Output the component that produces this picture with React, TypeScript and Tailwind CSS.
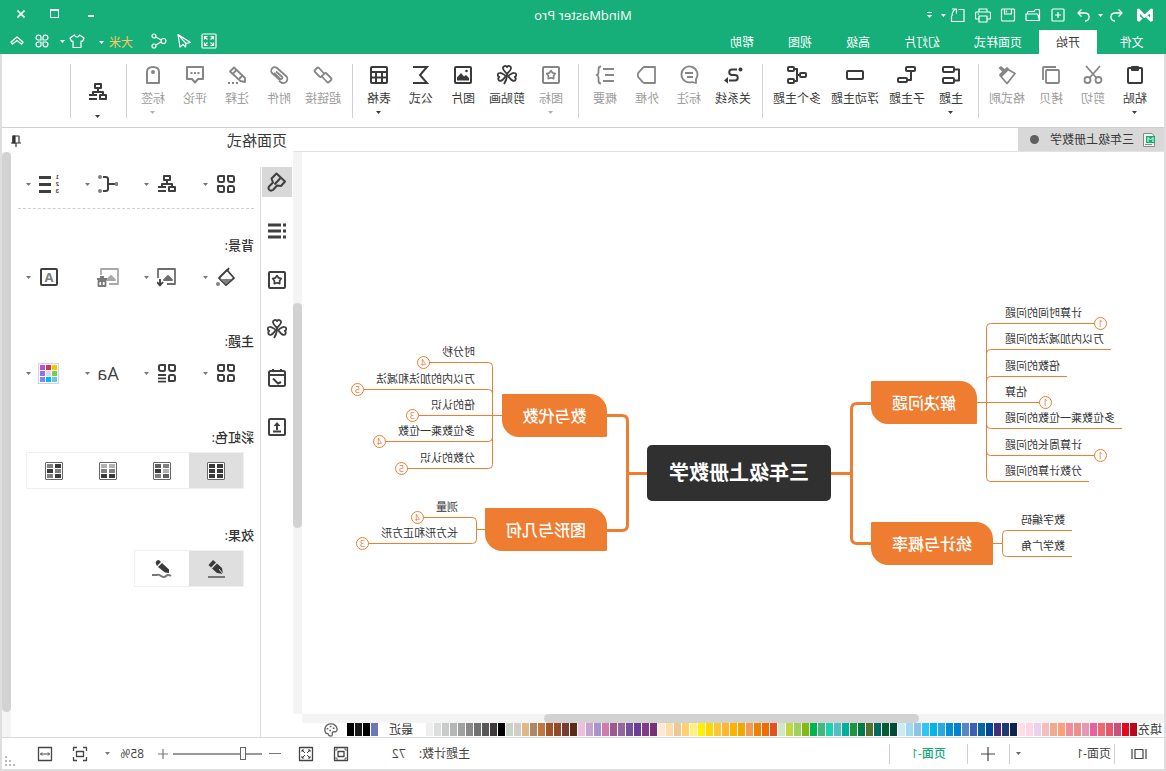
import { ReactNode, useState } from "react";

type IconProps = { children: ReactNode; size?: string; width?: number; box?: number };

function Icon({ children, size = "size-5", width = 2, box = 20 }: IconProps) {
  return (
    <svg
      className={`${size} shrink-0`}
      viewBox={`0 0 ${box} ${box}`}
      fill="none"
      stroke="currentColor"
      strokeWidth={width}
      strokeLinejoin="round"
      aria-hidden="true"
    >
      {children}
    </svg>
  );
}

function Caret({ className = "" }: { className?: string }) {
  return (
    <svg className={`h-[3px] w-[5px] shrink-0 ${className}`} viewBox="0 0 5 3" fill="currentColor" aria-hidden="true">
      <path d="M0 0h5L2.5 3z" />
    </svg>
  );
}

/* ---------- shared drawings ---------- */

const leaf = "M10 10C8.500 8 6 6.500 6 4.300A2.100 2.100 0 0 1 10 3.200A2.100 2.100 0 0 1 14 4.300C14 6.500 11.500 8 10 10Z";

const clover = (
  <Icon width={1.8}>
    <path d={leaf} transform="translate(0 -1)" />
    <path d={leaf} transform="translate(-1 1) rotate(-98 10 10)" />
    <path d={leaf} transform="translate(1 1) rotate(98 10 10)" />
    <path d="M10 9c0 4 .8 7 3 10" />
  </Icon>
);

const starBox = (
  <Icon>
    <rect x="2" y="2" width="16" height="16" rx="1" />
    <path d="M10 5.600l1.600 2.300 2.700.700-1.700 2.200.1 2.800-2.700-.9-2.700.9.1-2.800-1.700-2.200 2.700-.7z" strokeWidth="1.700" />
  </Icon>
);

const orgChart = (
  <Icon>
    <rect x="7" y="2" width="6" height="4" />
    <path d="M10 6v4M5 12v-2h10v2" />
    <rect x="2" y="13" width="6" height="4" />
    <path d="M11 13h8M11 17h8" />
  </Icon>
);

const fourShapes = (
  <Icon>
    <path d="M2 3.500Q2 2 3.500 2H8v3.500Q8 8 5.500 8H3.500Q2 8 2 6.500z" />
    <path d="M12 2h4.500Q18 2 18 3.500V6q0 2-2 2h-2.500Q12 8 12 6.500z" />
    <path d="M2 14q0-2 2-2h2.500Q8 12 8 13.500V18H3.500Q2 18 2 16.500z" />
    <path d="M12 13.500q0-1.500 1.500-1.500H18v3.500q0 2.500-2.500 2.500h-2Q12 18 12 16.500z" />
  </Icon>
);

/* ---------- ribbon ---------- */

type Tool = { label: string; icon: ReactNode; off?: boolean; menu?: boolean };

const toolGroups: Tool[][] = [
  [
    {
      label: "粘贴",
      menu: true,
      icon: (
        <Icon>
          <rect x="3" y="3" width="14" height="15" rx="1" />
          <path d="M7 2h6v3H7z" />
        </Icon>
      ),
    },
    {
      label: "剪切",
      off: true,
      icon: (
        <Icon width={1.8}>
          <circle cx="4.500" cy="15" r="3" />
          <circle cx="15.500" cy="15" r="3" />
          <path d="M3 1l10.500 12M17 1L6.500 13" />
        </Icon>
      ),
    },
    {
      label: "拷贝",
      off: true,
      icon: (
        <Icon width={1.8}>
          <rect x="2" y="5" width="13" height="13" rx="1" />
          <path d="M5 2h12q1 0 1 1v12" />
        </Icon>
      ),
    },
    {
      label: "格式刷",
      off: true,
      icon: (
        <Icon width={1.8}>
          <path d="M9 4.500L2 8.500l8 10 6-7z" />
          <path d="M8 3.500l9 8.500 1-2.500-3-3L18.500 3 16 1l-3.500 3L10 2z" fill="currentColor" stroke="none" />
        </Icon>
      ),
    },
  ],
  [
    {
      label: "主题",
      menu: true,
      icon: (
        <Icon>
          <rect x="7" y="2" width="11" height="5" rx="1" />
          <rect x="7" y="13" width="11" height="5" rx="1" />
          <path d="M7 4.500H2v11h5" />
        </Icon>
      ),
    },
    {
      label: "子主题",
      icon: (
        <Icon>
          <rect x="2" y="2" width="9" height="4" rx="1" />
          <rect x="10" y="13" width="9" height="4" rx="1" />
          <path d="M6 6v9h4" />
        </Icon>
      ),
    },
    {
      label: "浮动主题",
      icon: (
        <Icon>
          <rect x="2" y="6" width="16" height="8" rx="1" />
        </Icon>
      ),
    },
    {
      label: "多个主题",
      icon: (
        <Icon>
          <rect x="1" y="8" width="6" height="4" rx="1" />
          <rect x="13" y="2" width="6" height="4" rx="1" />
          <rect x="13" y="14" width="6" height="4" rx="1" />
          <path d="M7 10h3M13 4h-3v12h3" />
        </Icon>
      ),
    },
  ],
  [
    {
      label: "关系线",
      icon: (
        <Icon>
          <circle cx="2.500" cy="4.500" r="2" fill="currentColor" stroke="none" />
          <path d="M14 4.500H9a2.700 2.700 0 0 0 0 5.500h3a2.700 2.700 0 0 1 0 5.500H6" transform="matrix(-1 0 0 1 20 0)" />
          <path d="M15 12l4 3.500-4 3z" fill="currentColor" stroke="none" />
        </Icon>
      ),
    },
    {
      label: "标注",
      off: true,
      icon: (
        <Icon width={1.8}>
          <path d="M3 18v-4A8 8 0 1 1 7 17z" />
          <path d="M6 8h8M6 12h6" />
        </Icon>
      ),
    },
    {
      label: "外框",
      off: true,
      icon: (
        <Icon width={1.8}>
          <path d="M2 2h10.500q1 0 1.500.700l4.500 5q1.500 2.300 0 4.600l-4.500 5q-.5.700-1.500.700H2z" />
        </Icon>
      ),
    },
    {
      label: "概要",
      off: true,
      icon: (
        <Icon width={1.8}>
          <path d="M1 4h11M1 10h9M1 16h11M14 1.500q2.500 0 2.500 3v3q0 2 2 2.500-2 .5-2 2.500v3q0 3-2.500 3" />
        </Icon>
      ),
    },
  ],
  [
    { label: "图标", off: true, menu: true, icon: starBox },
    { label: "剪贴画", icon: clover },
    {
      label: "图片",
      icon: (
        <Icon>
          <rect x="2" y="2" width="16" height="16" rx="1" />
          <path d="M4 15.500v-2.500l3-3 2 1.500L12 8l4 4.500v3z" fill="currentColor" stroke="none" />
          <circle cx="6.500" cy="6" r="1.300" fill="currentColor" stroke="none" />
        </Icon>
      ),
    },
    {
      label: "公式",
      icon: (
        <Icon>
          <path d="M18 2H4l7 8-7 8h14" strokeLinejoin="miter" />
        </Icon>
      ),
    },
    {
      label: "表格",
      menu: true,
      icon: (
        <Icon>
          <rect x="2" y="2" width="16" height="16" rx="1" />
          <path d="M2 7h16M2 12.500h16M7 7v11M13 7v11" />
        </Icon>
      ),
    },
  ],
  [
    {
      label: "超链接",
      off: true,
      icon: (
        <Icon width={1.8}>
          <path d="M8.500 9L14 3q1-1 2 0l2 2q1 1 0 2l-4.500 4.500q-1 1-2 0L10 10" />
          <path d="M11.500 11L6 17q-1 1-2 0l-2-2q-1-1 0-2l4.500-4.500q1-1 2 0L10 10" />
        </Icon>
      ),
    },
    {
      label: "附件",
      off: true,
      icon: (
        <Icon width={1.8}>
          <path d="M9 15l7.500-6.500a3.500 3.500 0 0 0-4.500-5.500L3 11a4 4 0 0 0 5.500 6l1.500-1.500M13 6.500l-6 5.200a1.400 1.400 0 0 0 2 2L15 8" />
        </Icon>
      ),
    },
    {
      label: "注释",
      off: true,
      icon: (
        <Icon width={1.8}>
          <path d="M2 17v-4L13 2.500l4 4L6.500 16z" />
          <path d="M10.500 5l4 4M5 11l3 3" />
          <path d="M9 18h2M13 18h2M17 18h2" />
        </Icon>
      ),
    },
    {
      label: "评论",
      off: true,
      icon: (
        <Icon>
          <path d="M2 2h16v12h-5l-3 3.500L7 14H2z" />
          <path d="M5.500 8h2M9 8h2M12.500 8h2" />
        </Icon>
      ),
    },
    {
      label: "标签",
      off: true,
      menu: true,
      icon: (
        <Icon>
          <path d="M4 18V7q0-5 6-5t6 5v11z" />
          <circle cx="10" cy="7" r="2" fill="currentColor" stroke="none" />
        </Icon>
      ),
    },
  ],
];

const toolWidths: Record<number, string> = { 2: "w-[42px]", 3: "w-[46px]", 4: "w-[58px]" };

function ToolButton({ label, icon, off, menu }: Tool) {
  return (
    <button
      type="button"
      className={`flex h-[64px] flex-col items-center pt-[1px] ${toolWidths[label.length]} ${
        off ? "text-[#868686]" : "text-[#3a3a3a]"
      }`}
    >
      {icon}
      <span className={`mt-[6px] text-xs leading-4 whitespace-nowrap ${off ? "text-[#9c9c9c]" : ""}`}>{label}</span>
      {menu && <Caret className={off ? "mt-[4px] text-[#b0b0b0]" : "mt-[4px]"} />}
    </button>
  );
}

function Divider() {
  return <div className="mr-[6px] ml-[5px] h-[54px] w-px bg-[#d2d2d2]" />;
}

function Ribbon() {
  return (
    <div className="flex h-[74px] items-start border-b border-[#d0d0d0] bg-white pt-[10px] pl-2">
      {toolGroups.map((group, i) => (
        <div key={i} className="flex">
          {group.map((tool) => (
            <ToolButton key={tool.label} {...tool} />
          ))}
          <Divider />
        </div>
      ))}
      <button type="button" aria-label="布局" className="flex w-11 flex-col items-center pt-[18px] text-[#3a3a3a]">
        {orgChart}
        <Caret className="mt-[13px]" />
      </button>
      <Divider />
    </div>
  );
}

/* ---------- header ---------- */

function QuickButton({ label, children, className = "w-[25px]" }: { label: string; children: ReactNode; className?: string }) {
  return (
    <button type="button" aria-label={label} className={`flex h-full items-center justify-center ${className}`}>
      {children}
    </button>
  );
}

const menuTabs = ["文件", "开始", "页面样式", "幻灯片", "高级", "视图", "帮助"];

function Header() {
  const [tab, setTab] = useState("开始");

  return (
    <header className="bg-[#16ae79] text-white">
      <div className="grid h-[30px] grid-cols-[1fr_auto_1fr] items-center">
        <div className="flex h-full items-center pl-[12px]">
          <svg className="h-4 w-[18px]" viewBox="0 0 18 16" fill="none" stroke="currentColor" strokeWidth="3" aria-hidden="true">
            <path d="M2.500 14V3l7 6.500L15.500 3v10.500" strokeLinejoin="round" />
            <path d="M2 14l5-4.500M16 14l-3.500-3.500" />
          </svg>
          <QuickButton label="撤销" className="ml-2 w-6">
            <Icon size="size-4" width={1.3} box={16}>
              <path d="M5.500 2.500L2 6l3.500 3.500M2 6h6.500c6 0 6 7.500.5 8" />
            </Icon>
          </QuickButton>
          <Caret className="mx-[1px]" />
          <QuickButton label="重做" className="w-[26px]">
            <Icon size="size-4" width={1.3} box={16}>
              <path d="M10.500 2.500L14 6l-3.500 3.500M14 6H7.500c-6 0-6 7.500-.5 8" />
            </Icon>
          </QuickButton>
          <QuickButton label="新建">
            <Icon size="size-4" width={1.2} box={16}>
              <rect x="2" y="2" width="12" height="12" rx="1" />
              <path d="M8 5v6M5 8h6" />
            </Icon>
          </QuickButton>
          <QuickButton label="打开">
            <Icon size="size-4" width={1.2} box={16}>
              <path d="M1.500 13.500V3.500q0-1 1-1h3l1.500 2h5.500q1 0 1 1v1.500M1.500 13.500L3 8q.3-1 1.300-1H15v5.500q0 1-1 1z" />
            </Icon>
          </QuickButton>
          <QuickButton label="保存">
            <Icon size="size-4" width={1.2} box={16}>
              <rect x="1.500" y="2" width="13" height="12" rx="1" />
              <path d="M4.500 2v5h7V2M9.500 3.500v2" />
            </Icon>
          </QuickButton>
          <QuickButton label="打印">
            <Icon size="size-4" width={1.2} box={16}>
              <path d="M4 5V2h8v3M4 12H1.500q-1 0-1-1V6q0-1 1-1h13q1 0 1 1v5q0 1-1 1H12" />
              <path d="M4 9h8v6H4zM12 7h1.500" />
            </Icon>
          </QuickButton>
          <QuickButton label="导出">
            <Icon size="size-4" width={1.2} box={16}>
              <path d="M7.500 2.500H2v12h12.500V9M14 2H9.500v4.500M9.500 2C13 3 14 6 14 9" />
            </Icon>
          </QuickButton>
          <Caret />
          <button type="button" aria-label="自定义" className="ml-[9px] flex flex-col items-center gap-[2px]">
            <span className="h-[1px] w-[5px] bg-white" />
            <Caret />
          </button>
        </div>
        <h1 className="text-[13px] leading-5">MindMaster Pro</h1>
        <div className="flex h-full items-center justify-end pr-[5px]">
          <QuickButton label="最小化" className="w-9">
            <span className="mt-[2px] h-[2px] w-[6px] bg-white" />
          </QuickButton>
          <QuickButton label="最大化" className="w-9">
            <span className="-mt-1 h-[9px] w-[9px] border border-t-2 border-white" />
          </QuickButton>
          <QuickButton label="关闭" className="w-8 pb-[2px]">
            <Icon size="size-2" width={1.6} box={8}>
              <path d="M.5.5l7 7M7.500.5l-7 7" />
            </Icon>
          </QuickButton>
        </div>
      </div>

      <div className="flex h-6 items-stretch">
        <nav className="flex text-xs">
          {menuTabs.map((name, i) => (
            <button
              key={name}
              type="button"
              onClick={() => setTab(name)}
              className={`pt-[2px] ${i === 0 ? "w-[69px]" : "px-[17px]"} ${tab === name ? "bg-white text-[#3a3a3a]" : ""}`}
            >
              {name}
            </button>
          ))}
        </nav>
        <div className="ml-auto flex items-center pr-[5px] pb-[2px]">
          <QuickButton label="全屏">
            <Icon size="size-4" width={1.2} box={16}>
              <rect x="1" y="1" width="14" height="14" rx="1" />
              <path d="M3.500 6.500v-3h3M3.500 3.500l3 3M12.500 6.500v-3h-3M12.500 3.500l-3 3M3.500 9.500v3h3M3.500 12.500l3-3M12.500 9.500v3h-3M12.500 12.500l-3-3" />
            </Icon>
          </QuickButton>
          <QuickButton label="发送">
            <Icon size="size-4" width={1.2} box={16}>
              <path d="M14 1.500L1.500 9.500 6 10.500l.5 3.500 2.500-2.500 3 2.500zM14 1.500L6 10.500" />
            </Icon>
          </QuickButton>
          <QuickButton label="分享">
            <Icon size="size-4" width={1.2} box={16}>
              <circle cx="3.500" cy="8" r="2.500" />
              <circle cx="13" cy="3" r="2" />
              <circle cx="13" cy="13" r="2" />
              <path d="M5.800 7l5.500-3M5.800 9l5.500 3" />
            </Icon>
          </QuickButton>
          <button type="button" className="ml-[13px] flex items-center gap-[5px] pt-[3px] text-xs leading-4 text-[#ffc95c]">
            大米
            <Caret className="text-white" />
          </button>
          <QuickButton label="皮肤" className="ml-[10px] w-6">
            <Icon size="size-4" width={1.2} box={16}>
              <path d="M5.500 2L1 5l1.500 3.500L4 8v6.500h8V8l1.500.5L15 5l-4.500-3q-.5 2-2.500 2T5.500 2z" />
            </Icon>
          </QuickButton>
          <Caret />
          <QuickButton label="应用" className="ml-[5px] w-[26px]">
            <Icon size="size-4" width={1.2} box={16}>
              <path d="M7 7V4a2.500 2.500 0 1 0-3 3zM9 7V4a2.500 2.500 0 1 1 3 3zM7 9v3a2.500 2.500 0 1 1-3-3zM9 9v3a2.500 2.500 0 1 0 3-3z" />
            </Icon>
          </QuickButton>
          <QuickButton label="收起" className="w-6">
            <Icon size="size-4" width={1.3} box={16}>
              <path d="M2 9l6-5 6 5-1.500 2L8 7.500 3.500 11z" />
            </Icon>
          </QuickButton>
        </div>
      </div>
    </header>
  );
}

/* ---------- mind map ---------- */

type Leaf = { text: string; y: number; count?: number };
type Branch = {
  text: string;
  side: "left" | "right";
  box: { x: number; y: number; w: number };
  spine: number;
  textX: number;
  leaves: Leaf[];
};

// Coordinates are canvas pixels. textX is the edge of the leaf text nearest to the branch.
const branches: Branch[] = [
  {
    text: "解决问题",
    side: "left",
    box: { x: 187, y: 229, w: 106 },
    spine: 177,
    textX: 159,
    leaves: [
      { text: "计算时间的问题", y: 171, count: 1 },
      { text: "万以内加减法的问题", y: 197 },
      { text: "倍数的问题", y: 224 },
      { text: "估算", y: 250, count: 1 },
      { text: "多位数乘一位数的问题", y: 276 },
      { text: "计算周长的问题", y: 303, count: 1 },
      { text: "分数计算的问题", y: 329 },
    ],
  },
  {
    text: "统计与概率",
    side: "left",
    box: { x: 171, y: 370, w: 122 },
    spine: 161,
    textX: 143,
    leaves: [
      { text: "数字编码", y: 378 },
      { text: "数学广角", y: 404 },
    ],
  },
  {
    text: "数与代数",
    side: "right",
    box: { x: 557, y: 242, w: 105 },
    spine: 671,
    textX: 689,
    leaves: [
      { text: "时分秒", y: 210, count: 4 },
      { text: "万以内的加法和减法", y: 237, count: 5 },
      { text: "倍的认识", y: 263, count: 3 },
      { text: "多位数乘一位数", y: 289, count: 4 },
      { text: "分数的认识", y: 316, count: 5 },
    ],
  },
  {
    text: "图形与几何",
    side: "right",
    box: { x: 557, y: 356, w: 122 },
    spine: 687,
    textX: 706,
    leaves: [
      { text: "测量", y: 365, count: 4 },
      { text: "长方形和正方形", y: 391, count: 3 },
    ],
  },
];

function branchPath({ side, box, spine, textX, leaves }: Branch) {
  const dir = side === "left" ? -1 : 1;
  const boxEdge = side === "left" ? box.x : box.x + box.w;
  const mid = box.y + 21.5;
  const s = spine + 0.5;
  const parts = [`M${boxEdge} ${mid}H${s}`];
  leaves.forEach((l) => {
    const y = l.y + 0.5;
    const end = textX + dir * (l.text.length * 11 + (l.count ? 13 : 7));
    const bend = Math.abs(y - mid) < 2 ? 0 : y < mid ? 4 : -4;
    parts.push(`M${s} ${mid}V${y + bend}Q${s} ${y} ${s + dir * Math.abs(bend)} ${y}H${end}`);
  });
  return parts.join("");
}

function MindMap() {
  return (
    <div className="relative h-[562px] flex-1 overflow-hidden bg-white">
      <svg className="absolute inset-0 size-full" fill="none" stroke="#ee7d31" aria-hidden="true">
        <path strokeWidth="3" d="M333 321.500H312.500M293 251.500H307Q312.500 251.500 312.500 257V386Q312.500 391.500 307 391.500H293" />
        <path strokeWidth="3" d="M517 321.500H536.500M557 263.500H542Q536.500 263.500 536.500 269V373Q536.500 378.500 542 378.500H557" />
        {branches.map((b) => (
          <path key={b.text} d={branchPath(b)} />
        ))}
      </svg>

      <div className="absolute top-[293px] left-[333px] flex h-14 w-[184px] items-center justify-center rounded-[5px] bg-[#303030] text-xl leading-7 font-bold text-white">
        三年级上册数学
      </div>

      {branches.map((b) => (
        <div key={b.text}>
          <div
            className="absolute flex h-[43px] items-center justify-center rounded-tl-[17px] rounded-tr-[1px] rounded-br-[17px] rounded-bl-[1px] bg-[#ee7d31] text-base leading-6 font-medium text-white"
            style={{ left: b.box.x, top: b.box.y, width: b.box.w }}
          >
            {b.text}
          </div>
          {b.leaves.map((l) => {
            const w = l.text.length * 11;
            const left = b.side === "left" ? b.textX - w : b.textX;
            const badge = b.side === "left" ? left - 25 : left + w + 12;
            return (
              <div key={l.text}>
                <span
                  className="absolute text-[11px] leading-4 whitespace-nowrap text-[#333]"
                  style={{ left, top: l.y - 18 }}
                >
                  {l.text}
                </span>
                {l.count && (
                  <span
                    className="absolute flex size-[13px] items-center justify-center rounded-full border border-[#ee7d31] bg-white text-[9px] leading-3 text-[#ee7d31]"
                    style={{ left: badge, top: l.y - 6 }}
                  >
                    {l.count}
                  </span>
                )}
              </div>
            );
          })}
        </div>
      ))}
    </div>
  );
}

/* ---------- colour strip ---------- */

const palette = [
  "#b60a1c", "#e00a1a", "#c94f7c", "#ec5567", "#ea6a70", "#ea5f9e", "#e597b6", "#ee8e88", "#f28c9a", "#ff9f78",
  "#efaa94", "#f7bdbd", "#ead3ea", "#ffd4e4", "#ffdfe5", "#10234f", "#203a70", "#3f2e7e", "#00499a", "#0468a5",
  "#3e60b0", "#5586c6", "#0082d0", "#0090d8", "#29aae2", "#00b4f0", "#2fc5f5", "#8bc3ea", "#9fdaee", "#cde9f4",
  "#004a38", "#005c33", "#006a5e", "#56702f", "#007a48", "#1e9540", "#00b09a", "#52bfc0", "#1cd0b0", "#43b87c",
  "#00b550", "#80bb10", "#a0d060", "#c0d840", "#cfe7c4", "#e5501e", "#ee6c00", "#ee8200", "#f59a50", "#f2a800",
  "#ffb000", "#ffb52d", "#fbc834", "#ffd800", "#ffef00", "#fff080", "#ffd070", "#edc896", "#ffddaa", "#fde8d0",
  "#7a3078", "#803a88", "#6a3c96", "#77509a", "#9565a0", "#a0588c", "#d07bb0", "#a892d0", "#c5a5cc", "#ecc0dc",
  "#5c2a1a", "#773e30", "#944a28", "#a65228", "#c07740", "#b08668", "#deb887", "#d4ccc6", "#c8d3ca", "#000000",
  "#3e3a39", "#595757", "#727171", "#898989", "#9fa0a0", "#b5b5b6", "#c9caca", "#dcdddd", "#efefef",
];

const recent = ["#6c77b8", "#000000", "#1a1a1a", "#000001"];

function Swatches({ colors }: { colors: string[] }) {
  return (
    <div className="flex gap-px">
      {colors.map((c) => (
        <button key={c} type="button" aria-label={c} className="h-[13px] w-[7px]" style={{ backgroundColor: c }} />
      ))}
    </div>
  );
}

function ColorStrip() {
  return (
    <div className="flex h-[14px] items-start pl-[2px] text-xs leading-[14px] text-[#3a3a3a]">
      <span className="mr-px w-6 shrink-0">填充</span>
      <Swatches colors={palette} />
      <span className="mr-[11px] ml-[13px] shrink-0">最近</span>
      <Swatches colors={recent} />
      <button type="button" aria-label="更多颜色" className="ml-[9px] text-[#666]">
        <Icon size="size-[14px]" width={1.6} box={16}>
          <path d="M8 15q-1.500 0-1.500-2 .5-3-2-3H2.500Q1 9 1 7q1-6 7-6t7 6q0 5-3 5-1 0-1 1.500Q10.500 15 8 15z" />
          <path d="M4 6h2M7.500 4h2M11 6.500h2M8 8.500h2" />
        </Icon>
      </button>
    </div>
  );
}

/* ---------- side panel ---------- */

const sideTabs: { label: string; icon: ReactNode }[] = [
  {
    label: "页面格式",
    icon: (
      <Icon>
        <path d="M10.500 1.500L2 9.500l4 4.500 4-.5 4 4.500q2.500 1.500 4-.5 1.200-2-.5-3.500L14 10.500l1.500-4z" />
        <path d="M6.500 6l6 6.500" />
      </Icon>
    ),
  },
  {
    label: "大纲",
    icon: (
      <Icon width={3}>
        <path d="M1 4h3M1 10h3M1 16h3M6 4h13M6 10h13M6 16h13" />
      </Icon>
    ),
  },
  { label: "图标", icon: starBox },
  { label: "剪贴画", icon: clover },
  {
    label: "任务",
    icon: (
      <Icon>
        <rect x="2" y="3" width="16" height="15" rx="1.500" />
        <path d="M2 7h16M6 1v3M14 1v3M6 14l3 1.500 5-5" />
      </Icon>
    ),
  },
  {
    label: "导出",
    icon: (
      <Icon>
        <rect x="2" y="2" width="16" height="16" rx="1" />
        <path d="M6 14.500h8M10 13V7" />
        <path d="M6.500 9L10 5l3.500 4z" fill="currentColor" stroke="none" />
      </Icon>
    ),
  },
];

type Option = { label: string; icon: ReactNode; plain?: boolean };

const layoutOptions: Option[] = [
  { label: "结构", icon: fourShapes },
  { label: "布局", icon: orgChart },
  {
    label: "连接线",
    icon: (
      <Icon>
        <path d="M2 10h8M15 3h-2.500Q10 3 10 5v10q0 2 2.500 2H15" />
        <g fill="#808080" stroke="none">
          <circle cx="1.500" cy="10" r="2" />
          <circle cx="18" cy="3" r="2" />
          <circle cx="18" cy="17" r="2" />
        </g>
      </Icon>
    ),
  },
  {
    label: "编号",
    icon: (
      <span className="flex h-5 w-5 items-center justify-between">
        <span className="flex flex-col font-['Liberation_Sans',sans-serif] text-[6px] leading-[7px] font-bold">
          <span>1</span>
          <span>2</span>
          <span>3</span>
        </span>
        <span className="flex flex-col gap-1">
          <span className="h-[3px] w-3 bg-current" />
          <span className="h-[3px] w-3 bg-current" />
          <span className="h-[3px] w-3 bg-current" />
        </span>
      </span>
    ),
  },
];

const backgroundOptions: Option[] = [
  {
    label: "背景颜色",
    icon: (
      <Icon width={1.8}>
        <path d="M2 11l7-8 8 8-7 7z" />
        <path d="M4 12h12l-6 5.500z" fill="#808080" stroke="none" />
        <path d="M7 1l2 3" />
        <circle cx="18" cy="17" r="2" fill="#808080" stroke="none" />
      </Icon>
    ),
  },
  {
    label: "背景图片",
    icon: (
      <Icon width={1.8}>
        <g stroke="#6e6e6e">
          <path d="M10 17H2V2h17v9" />
          <path d="M5 13l4-4 4 4z" fill="#6e6e6e" />
        </g>
        <path d="M17 12v5M14 15l3 3.500 3-3.500" />
      </Icon>
    ),
  },
  {
    label: "移除背景",
    plain: true,
    icon: (
      <Icon size="h-5 w-6" width={1.8}>
        <g stroke="#a8a8a8">
          <path d="M9 17H0V2h17v6" />
          <path d="M3 13l4-4 4 4z" fill="#a8a8a8" />
        </g>
        <path d="M11 12h10M12.500 14h7v5h-7zM16 14v5M14 10h4" stroke="#7a7a7a" />
      </Icon>
    ),
  },
  {
    label: "水印",
    icon: (
      <span className="flex size-[18px] items-center justify-center rounded-xs border-2 border-current text-[13px] leading-4 font-bold">
        <span className="text-[#808080]">A</span>
      </span>
    ),
  },
];

const themeColors = [
  "bg-[#f0c800]", "bg-[#e0304e]", "bg-[#c050d0]",
  "bg-[#78d048]", "bg-[#dcdcdc]", "bg-[#9070f0]",
  "bg-[#68c8dc]", "bg-[#00b8ff]", "bg-[#7a88ff]",
];

const themeOptions: Option[] = [
  { label: "主题", icon: fourShapes },
  {
    label: "主题样式",
    icon: (
      <Icon>
        <path d="M2 3.500Q2 2 3.500 2H8v3.500Q8 8 5.500 8H3.500Q2 8 2 6.500z" />
        <path d="M12 2h4.500Q18 2 18 3.500V6q0 2-2 2h-2.500Q12 8 12 6.500z" />
        <path d="M2 14q0-2 2-2h2.500Q8 12 8 13.500V18H3.500Q2 18 2 16.500z" />
        <path d="M11 12h8M11 15.300h8M11 18.600h8" strokeWidth="1.800" />
      </Icon>
    ),
  },
  { label: "主题字体", icon: <span className="text-lg leading-5 font-medium">Aa</span> },
  {
    label: "主题颜色",
    icon: (
      <span className="grid size-[21px] grid-cols-3 gap-px border border-[#c8d4ea] p-px">
        {themeColors.map((c) => (
          <span key={c} className={c} />
        ))}
      </span>
    ),
  },
];

function OptionRow({ options }: { options: Option[] }) {
  return (
    <div className="flex h-5 pl-[22px] text-[#3f3f3f]">
      {options.map((o) => (
        <button key={o.label} type="button" aria-label={o.label} className="flex w-[59px] shrink-0 items-center gap-[6px]">
          <span className="flex w-6 shrink-0 justify-center">{o.icon}</span>
          {!o.plain && <Caret className="text-[#777]" />}
        </button>
      ))}
    </div>
  );
}

function Heading({ children }: { children: ReactNode }) {
  return <h3 className="ml-[6px] text-[13px] leading-5 font-medium text-[#333]">{children}</h3>;
}

const rainbows = [
  ["#3a3a3a", "#3a3a3a", "#3a3a3a", "#3a3a3a", "#3a3a3a", "#3a3a3a"],
  ["#808080", "#606060", "#b0b0b0", "#3a3a3a", "#606060", "#808080"],
  ["#b0b0b0", "#b0b0b0", "#808080", "#808080", "#3a3a3a", "#3a3a3a"],
  ["#3a3a3a", "#808080", "#808080", "#3a3a3a", "#3a3a3a", "#808080"],
];

const effects: Option[] = [
  {
    label: "直线",
    icon: (
      <Icon>
        <path d="M3 15l1-6 5-4.500 5 5L9 14z" fill="currentColor" stroke="none" />
        <path d="M10 3.500L13 1l4.500 5-2.500 2.500z" fill="currentColor" stroke="none" />
        <path d="M3 15l4-5" stroke="#dfdfdf" strokeWidth="1" />
        <path d="M1 18h17" stroke="#777" />
      </Icon>
    ),
  },
  {
    label: "手绘",
    icon: (
      <Icon>
        <path d="M3 14l0-3.500L10 4l4 4-7 5.500z" fill="currentColor" stroke="none" />
        <path d="M11 3l1.500-1.500q1.500-1 3 .5t.5 3L15 7z" fill="currentColor" stroke="none" />
        <path d="M1 17q3-2 5 0t5 0 4-1h5" stroke="#777" />
      </Icon>
    ),
  },
];

function SidePanel() {
  const [active, setActive] = useState("页面格式");
  const [rainbow, setRainbow] = useState(0);
  const [effect, setEffect] = useState("直线");

  return (
    <aside className="flex w-[291px] shrink-0 flex-col">
      <div className="flex h-6 items-center justify-between pr-2 pl-[6px]">
        <h2 className="text-[15px] leading-6 text-[#3a3a3a]">页面格式</h2>
        <button type="button" aria-label="固定" className="pt-[2px] text-[#333]">
          <Icon size="size-[12px]" width={1.2} box={12}>
            <path d="M3 1h6v7H3zM1 8h10M6 8v4" />
            <path d="M7 1h2v7H7z" fill="currentColor" />
          </Icon>
        </button>
      </div>
      <div className="flex flex-1">
        <div className="mt-[15px] flex w-[33px] shrink-0 flex-col items-center gap-[19px] border-r border-[#dcdcdc]">
          {sideTabs.map((t) => (
            <button
              key={t.label}
              type="button"
              aria-label={t.label}
              onClick={() => setActive(t.label)}
              className={`flex size-[30px] items-center justify-center text-[#3f3f3f] ${active === t.label ? "bg-[#d8d8d8]" : ""}`}
            >
              {t.icon}
            </button>
          ))}
        </div>

        <div className="min-w-0 flex-1 pt-[22px]">
          <OptionRow options={layoutOptions} />
          <div className="mt-[14px] mr-[7px] ml-[6px] border-t border-dashed border-[#cfcfcf]" />

          <div className="mt-[26px] flex flex-col gap-3">
            <Heading>背景:</Heading>
            <OptionRow options={backgroundOptions} />
          </div>
          <div className="mt-[44px] flex flex-col gap-3">
            <Heading>主题:</Heading>
            <OptionRow options={themeOptions} />
          </div>

          <div className="mt-[44px]">
            <Heading>彩虹色:</Heading>
            <div className="mt-[5px] ml-4 flex w-fit border border-[#f0f0f0]">
              {rainbows.map((cells, i) => (
                <button
                  key={i}
                  type="button"
                  aria-label={`彩虹色 ${i + 1}`}
                  aria-pressed={rainbow === i}
                  onClick={() => setRainbow(i)}
                  className={`flex h-[35px] w-[54px] items-center justify-center ${rainbow === i ? "bg-[#dfdfdf]" : ""}`}
                >
                  <span className="grid size-[18px] grid-cols-2 gap-x-[2px] gap-y-px rounded-[1px] border border-[#666] bg-white p-px">
                    {cells.map((c, n) => (
                      <span key={n} style={{ backgroundColor: c }} />
                    ))}
                  </span>
                </button>
              ))}
            </div>
          </div>

          <div className="mt-9">
            <Heading>效果:</Heading>
            <div className="mt-[5px] ml-4 flex w-fit border border-[#f0f0f0]">
              {effects.map((e) => (
                <button
                  key={e.label}
                  type="button"
                  aria-label={e.label}
                  aria-pressed={effect === e.label}
                  onClick={() => setEffect(e.label)}
                  className={`flex h-[35px] w-[54px] items-center justify-center text-[#3a3a3a] ${effect === e.label ? "bg-[#dfdfdf]" : ""}`}
                >
                  {e.icon}
                </button>
              ))}
            </div>
          </div>
        </div>

        <div className="flex w-[9px] shrink-0 flex-col bg-[#f4f4f4] pb-[25px]">
          <div className="flex-1 rounded-full bg-[#d2d2d2]" />
        </div>
      </div>
    </aside>
  );
}

/* ---------- status bar ---------- */

function StatusBar() {
  const [zoom, setZoom] = useState(85);

  return (
    <footer className="flex h-[32px] items-center border-t border-[#d8d8d8] text-xs text-[#444]">
      <button type="button" aria-label="页面列表" className="ml-[17px]">
        <Icon size="size-4" width={1.2} box={16}>
          <path d="M1 3v10M15 3v10M4 3.500h8v9H4z" />
        </Icon>
      </button>
      <div className="ml-4 h-5 w-px bg-[#cfcfcf]" />
      <button type="button" className="ml-[3px] flex w-[95px] items-center justify-between">
        页面-1
        <Caret className="text-[#666]" />
      </button>
      <div className="ml-[6px] h-5 w-px bg-[#cfcfcf]" />
      <button type="button" aria-label="新建页面" className="flex w-[41px] justify-center">
        <Icon size="size-4" width={1.2} box={16}>
          <path d="M8 1v14M1 8h14" />
        </Icon>
      </button>
      <div className="h-5 w-px bg-[#cfcfcf]" />
      <button type="button" className="w-[77px] font-medium text-[#16a877]">
        页面-1
      </button>
      <div className="h-5 w-px bg-[#cfcfcf]" />

      <span className="ml-auto">主题计数:</span>
      <span className="ml-[13px]">72</span>
      <button type="button" aria-label="适应窗口" className="ml-[43px]">
        <Icon size="size-4" width={1.3} box={16}>
          <rect x="1.500" y="1.500" width="13" height="13" />
          <rect x="5" y="5.500" width="6" height="5" />
          <path d="M3 5V3h2M11 3h2v2M3 11v2h2M11 13h2v-2" strokeWidth=".8" />
        </Icon>
      </button>
      <button type="button" aria-label="全屏显示" className="ml-[19px]">
        <Icon size="size-4" width={1.3} box={16}>
          <rect x="1.500" y="1.500" width="13" height="13" />
          <path d="M4 6V4h2M4 4l3 3M12 6V4h-2M12 4L9 7M4 10v2h2M4 12l3-3M12 10v2h-2M12 12L9 9" strokeWidth="1" />
        </Icon>
      </button>
      <button type="button" aria-label="缩小" onClick={() => setZoom(zoom - 5)} className="ml-[17px] flex h-4 w-3 items-center">
        <span className="h-px w-full bg-[#777]" />
      </button>
      <input
        type="range"
        aria-label="缩放"
        min={10}
        max={400}
        value={zoom}
        onChange={(e) => setZoom(Number(e.target.value))}
        className="ml-[7px] h-[14px] w-[89px] appearance-none bg-linear-to-b from-transparent from-[6px] via-[#999] via-[6px] to-[#999] to-[8px] bg-[length:100%_8px] bg-no-repeat [&::-webkit-slider-thumb]:h-[13px] [&::-webkit-slider-thumb]:w-[6px] [&::-webkit-slider-thumb]:appearance-none [&::-webkit-slider-thumb]:border [&::-webkit-slider-thumb]:border-[#666] [&::-webkit-slider-thumb]:bg-white"
      />
      <button type="button" aria-label="放大" onClick={() => setZoom(zoom + 5)} className="ml-1 text-[#777]">
        <Icon size="size-3" width={1.2} box={12}>
          <path d="M6 1v10M1 6h10" />
        </Icon>
      </button>
      <button type="button" className="ml-[13px] flex items-center gap-[8px]">
        <span className="w-[26px] text-left">{zoom}%</span>
        <Caret className="text-[#777]" />
      </button>
      <button type="button" aria-label="适应页面" className="ml-[17px]">
        <Icon size="size-4" width={1.3} box={16}>
          <path d="M1.500 5V1.500H5M11 1.500h3.500V5M1.500 11v3.500H5M11 14.500h3.500V11M4.500 5.500h7v5h-7z" />
        </Icon>
      </button>
      <button type="button" aria-label="适应宽度" className="ml-[19px]">
        <Icon size="size-4" width={1.3} box={16}>
          <rect x="1.500" y="1.500" width="13" height="13" />
          <path d="M3.500 8h9M5 6.500L3.500 8 5 9.500M11 6.500L12.500 8 11 9.500" strokeWidth="1" />
        </Icon>
      </button>
      <svg className="mr-[3px] mb-[3px] ml-[22px] size-[10px] self-end text-[#bbb]" viewBox="0 0 10 10" fill="currentColor" aria-hidden="true">
        <path d="M8 0h2v2H8zM8 4h2v2H8zM8 8h2v2H8zM4 4h2v2H4zM4 8h2v2H4zM0 8h2v2H0z" />
      </svg>
    </footer>
  );
}

/* ---------- window ---------- */

export default function App() {
  return (
    <div className="flex min-h-screen -scale-x-100 flex-col overflow-hidden bg-white font-['Open_Sans','Noto_Sans_CJK_SC',sans-serif]">
      <Header />
      <div className="flex flex-1 flex-col border-x-2 border-b-2 border-[#dedede]">
        <Ribbon />
        <main className="flex flex-1">
          <div className="flex min-w-0 flex-1 flex-col">
            <div className="flex h-6 border-b border-[#e2e2e2]">
              <button type="button" className="flex w-[146px] items-center bg-[#d8d8d8] pl-2 text-xs text-[#3a3a3a]">
                <svg className="h-[14px] w-[14px]" viewBox="0 0 14 14" fill="none" aria-hidden="true">
                  <path d="M1.500 3.500L4 .5h8.500v13h-11z" fill="#f4f4f4" stroke="#888" />
                  <path d="M4 11.500h7" stroke="#888" />
                  <rect x="0" y="3" width="9" height="7" fill="#10b070" transform="translate(1 0)" />
                  <path d="M3 9V4.500L5.500 7 8 4.500V9" stroke="#fff" />
                </svg>
                <span className="ml-2">三年级上册数学</span>
                <span className="ml-[11px] size-[9px] rounded-full bg-[#606060]" />
              </button>
            </div>
            <div className="flex flex-1">
              <MindMap />
              <div className="w-[9px] shrink-0 bg-[#f4f4f4] pt-[151px]">
                <div className="h-[225px] rounded-full bg-[#d2d2d2]" />
              </div>
            </div>
            <div className="mr-[9px] h-[9px] bg-[#f4f4f4] pl-[245px]">
              <div className="h-full w-[375px] rounded-full bg-[#d2d2d2]" />
            </div>
            <ColorStrip />
          </div>
          <SidePanel />
        </main>
        <StatusBar />
      </div>
    </div>
  );
}
